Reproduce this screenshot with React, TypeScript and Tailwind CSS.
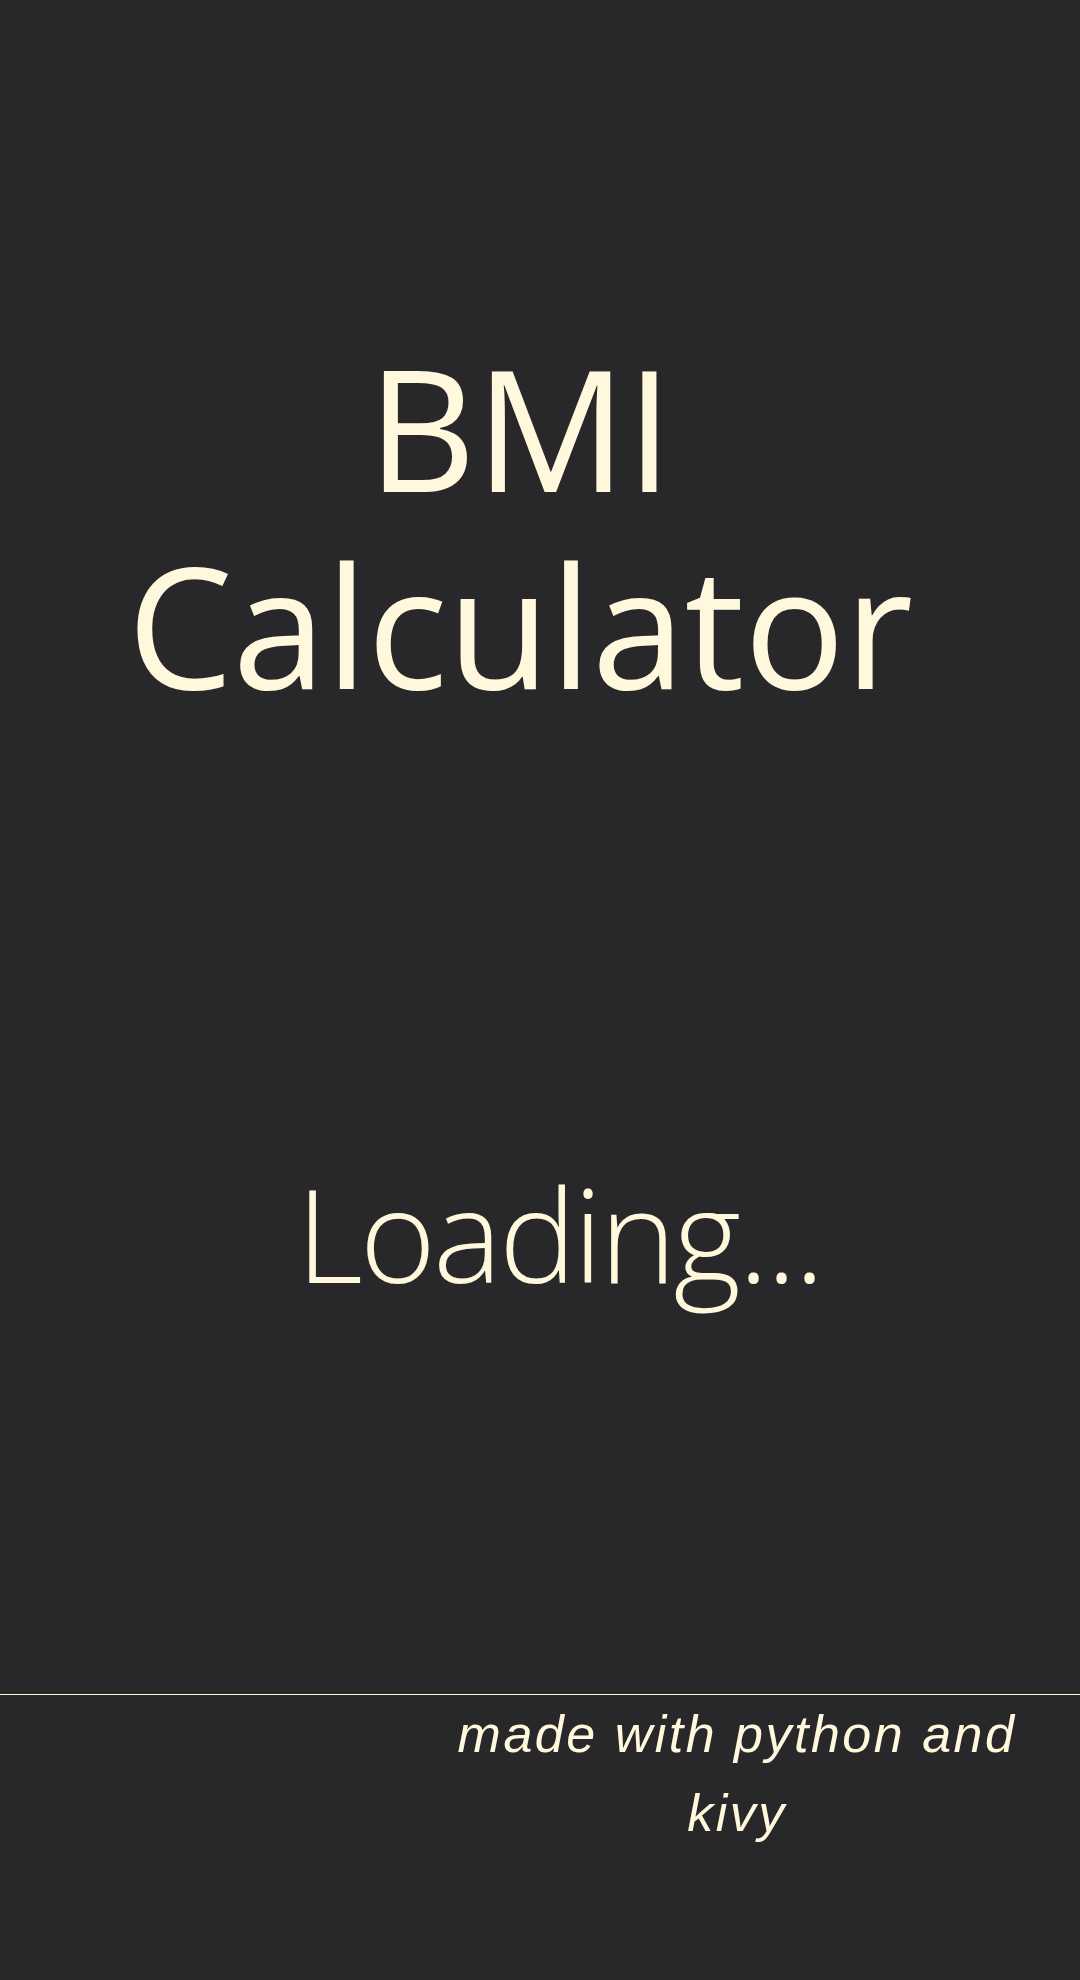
export default function App() {
  return (
    <div className="w-[1080px] h-[1980px] bg-[#28282a] text-[#fff8dc] flex flex-col">
      {/* title sits a little left of centre, as in the app */}
      <div className="pt-[328px] pr-[40px] flex flex-col items-center">
        <h1 className="font-['Open_Sans',sans-serif] text-[168px] leading-[197px] tracking-[-0.5px] text-center">
          <span className="block">BMI</span>
          <span className="block">Calculator</span>
        </h1>
      </div>

      <div className="mt-[446px] pl-[38px] flex justify-center">
        <p className="font-['Open_Sans',sans-serif] font-light text-[130px] leading-none tracking-[-3px]">Loading...</p>
      </div>

      <div className="mt-auto h-[286px] flex flex-col">
        <div className="h-px bg-[#fff8dc]" />
        <div className="flex justify-end">
          <p className="w-[686px] text-center font-['Liberation_Sans',sans-serif] italic text-[52px] leading-[79px] tracking-[2.5px]">
            made with python and
            <br />
            kivy
          </p>
        </div>
      </div>
    </div>
  );
}
